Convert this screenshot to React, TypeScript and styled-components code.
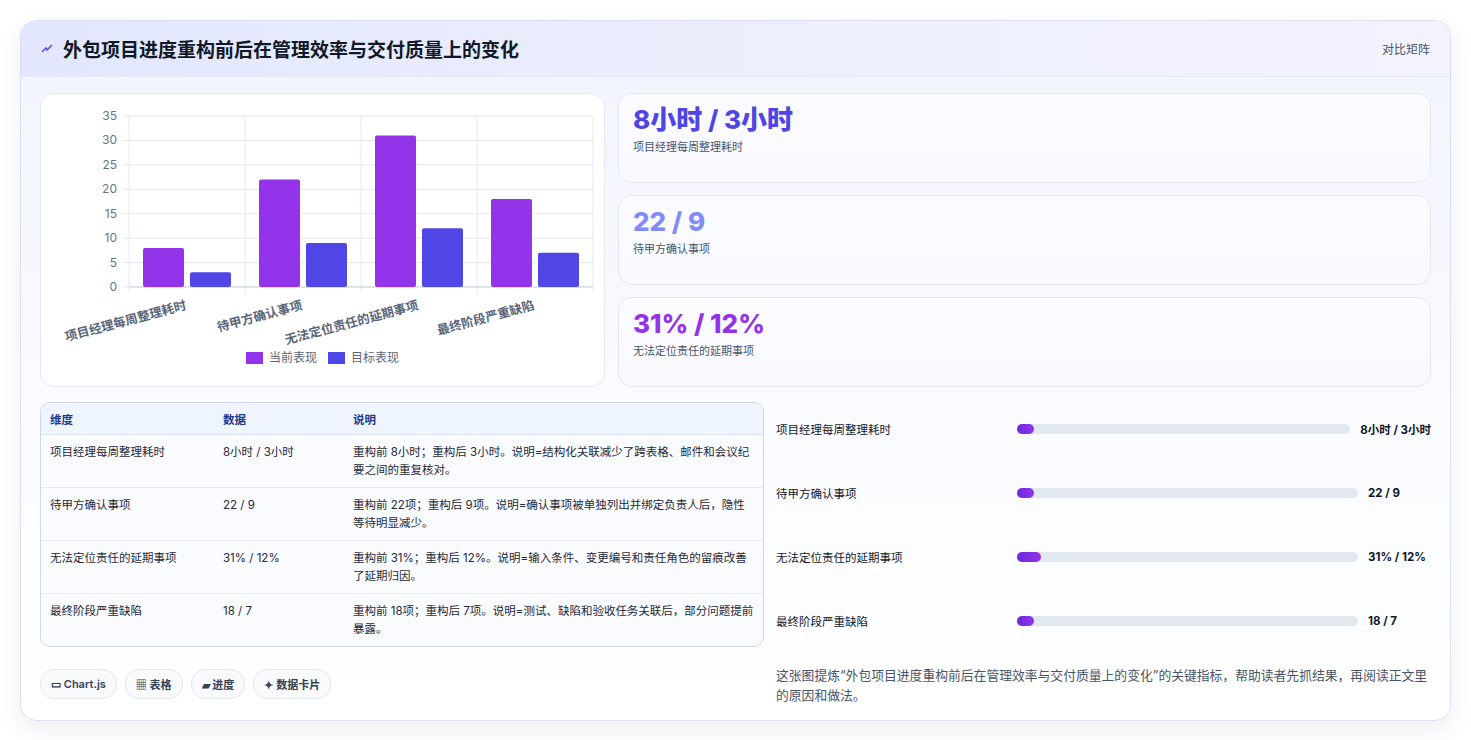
import React from 'react';
import styled, { createGlobalStyle } from 'styled-components';

const Global = createGlobalStyle`
  body { margin: 0; background: #fff; font-family: Inter, "Noto Sans CJK SC", sans-serif; color: #0f172a; }
`;

const Page = styled.div`
  padding: 20px 20px 22px 20px;
`;

const Card = styled.div`
  border: 1px solid #dbe0f5;
  border-radius: 16px;
  overflow: hidden;
  background: linear-gradient(180deg, #f1f3fe 0%, #fbfcff 60%, #fff 100%);
  box-shadow: 0 8px 24px rgba(30, 41, 99, 0.08);
`;

const Header = styled.div`
  height: 55px;
  display: flex;
  align-items: center;
  justify-content: space-between;
  padding: 0 20px;
  background: linear-gradient(90deg, #e2e7fd 0%, #eef0fd 60%, #f3f2fd 100%);
  border-bottom: 1px solid #e5e8f7;
`;

const Title = styled.h1`
  margin: 0;
  font-size: 19px;
  font-weight: 700;
  display: flex;
  align-items: center;
  gap: 10px;
  color: #111827;
`;

const Tag = styled.span`
  font-size: 12px;
  color: #475569;
`;

const Body = styled.div`
  padding: 16px 19px 14px 19px;
  display: flex;
  flex-direction: column;
  gap: 15px;
`;

const TopGrid = styled.div`
  display: grid;
  grid-template-columns: 565px 1fr;
  gap: 13px;
`;

const Panel = styled.div`
  background: #fff;
  border: 1px solid #e3e8f2;
  border-radius: 14px;
`;

const Stats = styled.div`
  display: flex;
  flex-direction: column;
  gap: 12px;
`;

const Stat = styled(Panel)`
  height: 90px;
  padding: 9px 14px;
  box-sizing: border-box;
  background: linear-gradient(180deg, #fcfcff, #f8f9ff);
`;

const StatValue = styled.div<{ $color: string }>`
  font-size: 26px;
  font-weight: 800;
  color: ${p => p.$color};
  line-height: 34px;
`;

const StatLabel = styled.div`
  font-size: 11px;
  color: #475569;
  margin-top: 1px;
`;

const BottomGrid = styled.div`
  display: grid;
  grid-template-columns: 724px 1fr;
  gap: 12px;
`;

const Table = styled.table`
  width: 100%;
  border-collapse: separate;
  border-spacing: 0;
  border: 1px solid #cfd8e6;
  border-radius: 10px;
  overflow: hidden;
  font-size: 11.5px;
  background: #fafbfe;
  th {
    text-align: left;
    background: #eef5ff;
    color: #1e3a8a;
    font-weight: 600;
    height: 31px;
    padding: 0 9px;
    border-bottom: 1px solid #dbe3ef;
  }
  td {
    vertical-align: top;
    padding: 8px 9px 8px 9px;
    line-height: 18px;
    color: #1f2937;
    border-bottom: 1px solid #e5eaf2;
  }
  tr:last-child td { border-bottom: none; }
`;

const Right = styled.div`
  display: flex;
  flex-direction: column;
  gap: 10px;
`;

const ProgRow = styled.div`
  display: grid;
  grid-template-columns: 231px 1fr auto;
  align-items: center;
  gap: 10px;
  height: 54px;
  font-size: 11.5px;
`;

const Track = styled.div`
  height: 10px;
  border-radius: 5px;
  background: #e2e8f0;
`;

const Fill = styled.div`
  height: 100%;
  border-radius: 5px;
  background: linear-gradient(90deg, #6d28d9, #9333ea);
`;

const Val = styled.span`
  font-weight: 700;
  min-width: 63px;
`;

const Note = styled.p`
  margin: 8px 0 0 0;
  font-size: 12.8px;
  line-height: 20px;
  color: #475569;
`;

const Chips = styled.div`
  display: flex;
  gap: 8px;
  margin-top: 22px;
`;

const Chip = styled.span`
  display: inline-flex;
  align-items: center;
  gap: 4px;
  height: 28px;
  padding: 0 10px;
  border: 1px solid #e2e8f0;
  border-radius: 14px;
  background: #f8fafc;
  font-size: 11px;
  font-weight: 600;
  color: #334155;
`;

const cats = ['项目经理每周整理耗时', '待甲方确认事项', '无法定位责任的延期事项', '最终阶段严重缺陷'];
const cur = [8, 22, 31, 18];
const tgt = [3, 9, 12, 7];

function Chart() {
  const x0 = 88, x1 = 552, yTop = 22, yBot = 193;
  const s = (yBot - yTop) / 35;
  const w = (x1 - x0) / 4;
  return (
    <svg width="564" height="292" style={{ display: 'block' }} fontFamily="Inter, 'Noto Sans CJK SC', sans-serif">
      {[0, 5, 10, 15, 20, 25, 30, 35].map(v => (
        <g key={v}>
          <line x1={x0 - 6} x2={x1} y1={yBot - v * s} y2={yBot - v * s} stroke="#e2e8f0" />
          <text x={x0 - 12} y={yBot - v * s + 4} fontSize="12" fill="#64748b" textAnchor="end">{v}</text>
        </g>
      ))}
      {[0, 1, 2, 3, 4].map(i => (
        <line key={i} x1={x0 + i * w} x2={x0 + i * w} y1={yTop} y2={yBot + 6} stroke="#e2e8f0" />
      ))}
      <line x1={x0} x2={x1} y1={yBot} y2={yBot} stroke="#cbd5e1" />
      {cats.map((c, i) => (
        <g key={c}>
          <rect x={x0 + i * w + 14} y={yBot - cur[i] * s} width="41" height={cur[i] * s} rx="2" fill="#9333ea" />
          <rect x={x0 + i * w + 61} y={yBot - tgt[i] * s} width="41" height={tgt[i] * s} rx="2" fill="#4f46e5" />
          <text
            x={x0 + i * w + 58}
            y={yBot + 22}
            fontSize="12.5"
            fontWeight="600"
            fill="#5b6679"
            textAnchor="end"
            transform={`rotate(-15 ${x0 + i * w + 58} ${yBot + 22})`}
          >
            {c}
          </text>
        </g>
      ))}
      <rect x="205" y="258" width="17" height="12" fill="#9333ea" />
      <text x="228" y="268" fontSize="12" fill="#5b6679">当前表现</text>
      <rect x="287" y="258" width="17" height="12" fill="#4f46e5" />
      <text x="310" y="268" fontSize="12" fill="#5b6679">目标表现</text>
    </svg>
  );
}

const rows = [
  ['项目经理每周整理耗时', '8小时 / 3小时', '重构前 8小时；重构后 3小时。说明=结构化关联减少了跨表格、邮件和会议纪要之间的重复核对。', 5],
  ['待甲方确认事项', '22 / 9', '重构前 22项；重构后 9项。说明=确认事项被单独列出并绑定负责人后，隐性等待明显减少。', 5],
  ['无法定位责任的延期事项', '31% / 12%', '重构前 31%；重构后 12%。说明=输入条件、变更编号和责任角色的留痕改善了延期归因。', 7],
  ['最终阶段严重缺陷', '18 / 7', '重构前 18项；重构后 7项。说明=测试、缺陷和验收任务关联后，部分问题提前暴露。', 5],
] as const;

export default function App() {
  return (
    <Page>
      <Global />
      <Card>
        <Header>
          <Title>
            <svg width="12" height="12" viewBox="0 0 12 12"><path d="M1 9 L5 5 L6 7 L11 2" stroke="#4f46e5" strokeWidth="1.4" fill="none" /></svg>
            外包项目进度重构前后在管理效率与交付质量上的变化
          </Title>
          <Tag>对比矩阵</Tag>
        </Header>
        <Body>
          <TopGrid>
            <Panel><Chart /></Panel>
            <Stats>
              <Stat><StatValue $color="#4f46e5">8小时 / 3小时</StatValue><StatLabel>项目经理每周整理耗时</StatLabel></Stat>
              <Stat><StatValue $color="#818cf8">22 / 9</StatValue><StatLabel>待甲方确认事项</StatLabel></Stat>
              <Stat><StatValue $color="#9333ea">31% / 12%</StatValue><StatLabel>无法定位责任的延期事项</StatLabel></Stat>
            </Stats>
          </TopGrid>
          <BottomGrid>
            <div>
              <Table>
                <thead>
                  <tr><th style={{ width: 155 }}>维度</th><th style={{ width: 112 }}>数据</th><th>说明</th></tr>
                </thead>
                <tbody>
                  {rows.map(r => (
                    <tr key={r[0]}><td>{r[0]}</td><td>{r[1]}</td><td>{r[2]}</td></tr>
                  ))}
                </tbody>
              </Table>
              <Chips>
                <Chip>▭ Chart.js</Chip>
                <Chip>▦ 表格</Chip>
                <Chip>▰ 进度</Chip>
                <Chip>✦ 数据卡片</Chip>
              </Chips>
            </div>
            <Right>
              {rows.map(r => (
                <ProgRow key={r[0]}>
                  <span>{r[0]}</span>
                  <Track><Fill style={{ width: `${r[3]}%` }} /></Track>
                  <Val>{r[1]}</Val>
                </ProgRow>
              ))}
              <Note>这张图提炼“外包项目进度重构前后在管理效率与交付质量上的变化”的关键指标，帮助读者先抓结果，再阅读正文里的原因和做法。</Note>
            </Right>
          </BottomGrid>
        </Body>
      </Card>
    </Page>
  );
}
